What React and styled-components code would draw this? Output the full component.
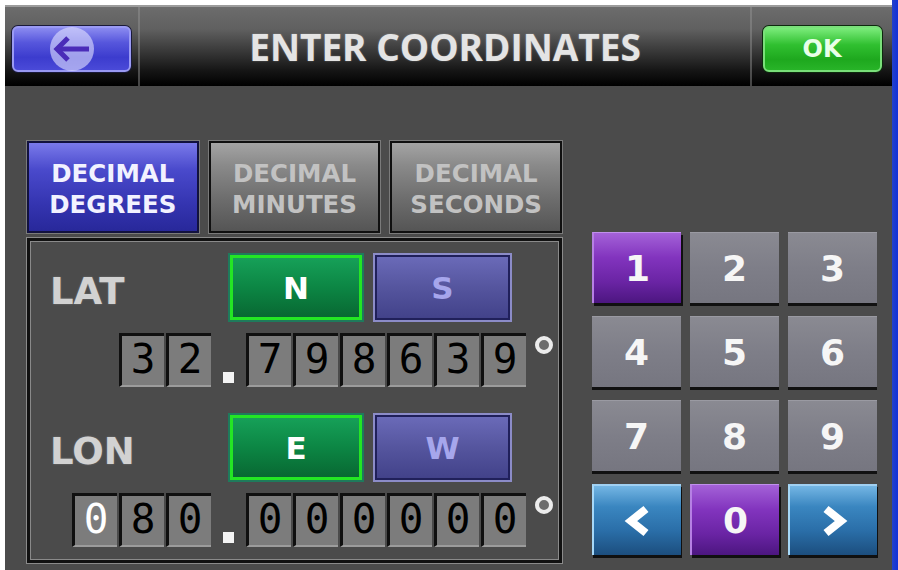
import React from 'react'
import styled, { createGlobalStyle, css } from 'styled-components'

const GlobalStyle = createGlobalStyle`
  html, body {
    margin: 0;
    padding: 0;
    background: #ffffff;
    width: 898px;
    height: 570px;
    overflow: hidden;
  }
  #root {
    height: 570px;
  }
  * {
    box-sizing: border-box;
  }
`

const Page = styled.div`
  display: flex;
  height: 570px;
  padding-left: 5px;
`

const Screen = styled.div`
  flex: 1;
  margin-top: 5px;
  display: flex;
  flex-direction: column;
  background: #4b4b4b;
`

const BlueEdge = styled.div`
  width: 6px;
  background: linear-gradient(to right, #2442c8, #1230d8);
`

// ---- header bar ----
const Header = styled.div`
  height: 81px;
  display: grid;
  grid-template-columns: 135px 1fr 140px;
  border-top: 2px solid #9c9c9c;
  background: linear-gradient(
    to bottom,
    #6c6c6c 0%,
    #606060 28%,
    #3e3e3e 52%,
    #161616 80%,
    #000000 100%
  );
`

const HeaderCell = styled.div`
  display: flex;
  align-items: flex-start;
  justify-content: center;
  padding-top: 19px;
  border-right: ${p => (p.$divider ? '2px solid rgba(150, 150, 150, 0.45)' : 'none')};
`

const Title = styled.div`
  font-family: 'Open Sans', 'DejaVu Sans', sans-serif;
  font-weight: 700;
  font-size: 37px;
  line-height: 44px;
  margin-top: -1px;
  color: #e4e4e4;
  text-shadow: 0 0 2px rgba(255, 255, 255, 0.3);
`

const HeadButton = styled.button`
  width: 119px;
  height: 46px;
  border-radius: 6px;
  display: flex;
  align-items: center;
  justify-content: center;
  padding: 0;
  cursor: pointer;
  font-family: 'DejaVu Sans', sans-serif;
  font-weight: 700;
  font-size: 24px;
  ${p =>
    p.$kind === 'back'
      ? css`
          border: 2px solid #9a9af4;
          box-shadow: 0 0 0 1px #1a1a3a;
          background: linear-gradient(to bottom, #8a8af0 0%, #5656dc 35%, #3c3cce 70%, #4a4ad8 100%);
        `
      : css`
          border: 2px solid #7ae07a;
          box-shadow: 0 0 0 1px #0d2a0d;
          color: #e8ffe8;
          background: linear-gradient(to bottom, #7cec7c 0%, #30c030 40%, #1ea81e 75%, #28b428 100%);
        `}
`

// ---- body ----
const Body = styled.div`
  flex: 1;
  display: flex;
  gap: 30px;
  padding: 55px 0 0 22px;
`

const LeftCol = styled.div`
  width: 535px;
  display: flex;
  flex-direction: column;
  gap: 5px;
`

const Tabs = styled.div`
  display: flex;
  gap: 10px;
`

const Tab = styled.div`
  flex: 1;
  height: 92px;
  display: flex;
  align-items: center;
  justify-content: center;
  text-align: center;
  font-family: 'DejaVu Sans', sans-serif;
  font-weight: 700;
  font-size: 24.5px;
  line-height: 31px;
  padding-top: 4px;
  border: 2px solid ${p => (p.$active ? '#12123e' : '#101010')};
  box-shadow: 0 0 0 1px #7a7a7a;
  color: ${p => (p.$active ? '#f2f2ff' : '#c2c2c2')};
  background: ${p =>
    p.$active
      ? 'linear-gradient(to bottom, #7a7aea 0%, #4a4acc 30%, #3434b0 70%, #28289a 100%)'
      : 'linear-gradient(to bottom, #a4a4a4 0%, #8a8a8a 25%, #6c6c6c 65%, #555555 100%)'};
`

const Panel = styled.div`
  height: 325px;
  border: 3px solid #111111;
  box-shadow: inset 0 0 0 1px #8a8a8a, 0 0 0 1px #8a8a8a;
  padding: 14px 6px 13px 20px;
  display: flex;
  flex-direction: column;
`

const CoordRow = styled.div`
  height: 65px;
  display: flex;
  align-items: center;
  margin-top: ${p => p.$top || 0}px;
`

const AxisLabel = styled.div`
  width: 180px;
  padding-top: 8px;
  font-family: 'DejaVu Sans', sans-serif;
  font-weight: 700;
  font-size: 37px;
  color: #d2d2d2;
  text-shadow: 0 0 2px rgba(255, 255, 255, 0.25);
`

const DirButton = styled.div`
  height: 65px;
  display: flex;
  align-items: center;
  justify-content: center;
  font-family: 'DejaVu Sans', sans-serif;
  font-weight: 700;
  font-size: 31px;
  ${p =>
    p.$on
      ? css`
          width: 132px;
          color: #ffffff;
          border: 3px solid #24e624;
          box-shadow: 0 0 0 2px #1f7a5c;
          background: linear-gradient(to bottom, #16a058 0%, #0c8644 50%, #086832 100%);
        `
      : css`
          width: 135px;
          margin-left: 13px;
          color: #a6a6ec;
          border: 2px solid #20205a;
          box-shadow: 0 0 0 2px #8c8cc8;
          background: linear-gradient(to bottom, #6a6ab8 0%, #55559e 50%, #42428a 100%);
        `}
`

const DigitRow = styled.div`
  height: 54px;
  margin-top: 13px;
  display: flex;
  justify-content: flex-end;
  align-items: stretch;
`

const DigitBox = styled.div`
  width: 45px;
  flex-shrink: 0;
  margin-right: 2px;
  background: #7c7c7c;
  border-top: 3px solid #101010;
  border-left: 3px solid #101010;
  border-bottom: 2px solid #9c9c9c;
  display: flex;
  justify-content: center;
  padding-top: 3px;
  font-family: 'DejaVu Sans Mono', monospace;
  font-size: 41px;
  line-height: 40px;
  color: ${p => (p.$cursor ? '#ffffff' : '#000000')};
`

const DotSlot = styled.div`
  width: 31px;
  flex-shrink: 0;
  margin-right: 2px;
  display: flex;
  justify-content: center;
  align-items: flex-end;
  padding-bottom: 4px;
`

const Dot = styled.div`
  width: 11px;
  height: 11px;
  background: #f4f4f4;
`

const DegreeRing = styled.div`
  width: 18px;
  height: 18px;
  flex-shrink: 0;
  align-self: flex-start;
  margin-left: 7px;
  margin-top: 3px;
  border-radius: 50%;
  border: 4px solid #ececec;
  background: #6c6c6c;
`

// ---- keypad ----
const Keypad = styled.div`
  margin-top: 91px;
  display: grid;
  grid-template-columns: repeat(3, 89px);
  grid-auto-rows: 71px;
  column-gap: 9px;
  row-gap: 13px;
  align-content: start;
`

const keyColors = {
  gray: css`
    background: linear-gradient(to bottom, #8a8a92 0%, #7e7e88 50%, #767680 100%);
    border-top: 1px solid #9a9aa2;
    box-shadow: 0 3px 0 #111111;
  `,
  purple: css`
    background: linear-gradient(to bottom, #a462d8 0%, #8234be 35%, #6a24a4 70%, #4c1680 100%);
    border-left: 2px solid #b680e4;
    border-top: 1px solid #c090ec;
    box-shadow: 2px 3px 0 #101010;
  `,
  blue: css`
    background: linear-gradient(to bottom, #74b6e4 0%, #3a86c0 30%, #2a6ea8 65%, #1c4e7e 100%);
    border-left: 2px solid #a6d8f8;
    border-top: 2px solid #a0d0f2;
    box-shadow: 1px 3px 0 #101010;
  `
}

const Key = styled.div`
  display: flex;
  align-items: center;
  justify-content: center;
  font-family: 'DejaVu Sans', sans-serif;
  font-weight: 700;
  font-size: 36px;
  color: #f6f6f6;
  ${p => keyColors[p.$tone || 'gray']}
`

const BackIcon = () => (
  <svg width="50" height="46" viewBox="0 0 50 46">
    <circle cx="25" cy="23" r="22" fill="rgba(226, 226, 255, 0.6)" />
    <path d="M10 23 H42" stroke="#4a2cb8" strokeWidth="5" />
    <path d="M21 12 L10 23 L21 34" fill="none" stroke="#4a2cb8" strokeWidth="5" strokeLinejoin="miter" />
  </svg>
)

const Chevron = ({ dir }) => (
  <svg width="28" height="32" viewBox="0 0 28 32">
    <polyline
      points={dir === 'left' ? '22,4 7,16 22,28' : '6,4 21,16 6,28'}
      fill="none"
      stroke="#ffffff"
      strokeWidth="8"
      strokeLinejoin="miter"
    />
  </svg>
)

const Digits = ({ whole, frac, cursor }) => (
  <DigitRow>
    {whole.split('').map((d, i) => (
      <DigitBox key={'w' + i} $cursor={cursor === i}>
        {d}
      </DigitBox>
    ))}
    <DotSlot>
      <Dot />
    </DotSlot>
    {frac.split('').map((d, i) => (
      <DigitBox key={'f' + i}>{d}</DigitBox>
    ))}
    <DegreeRing />
  </DigitRow>
)

const keys = [
  { label: '1', tone: 'purple' },
  { label: '2' },
  { label: '3' },
  { label: '4' },
  { label: '5' },
  { label: '6' },
  { label: '7' },
  { label: '8' },
  { label: '9' },
  { label: <Chevron dir="left" />, tone: 'blue' },
  { label: '0', tone: 'purple' },
  { label: <Chevron dir="right" />, tone: 'blue' }
]

const App = () => {
  return (
    <>
      <GlobalStyle />
      <Page>
        <Screen>
          <Header>
            <HeaderCell $divider>
              <HeadButton $kind="back">
                <BackIcon />
              </HeadButton>
            </HeaderCell>
            <HeaderCell $divider>
              <Title>ENTER COORDINATES</Title>
            </HeaderCell>
            <HeaderCell>
              <HeadButton $kind="ok">OK</HeadButton>
            </HeaderCell>
          </Header>

          <Body>
            <LeftCol>
              <Tabs>
                <Tab $active>
                  DECIMAL
                  <br />
                  DEGREES
                </Tab>
                <Tab>
                  DECIMAL
                  <br />
                  MINUTES
                </Tab>
                <Tab>
                  DECIMAL
                  <br />
                  SECONDS
                </Tab>
              </Tabs>

              <Panel>
                <CoordRow>
                  <AxisLabel>LAT</AxisLabel>
                  <DirButton $on>N</DirButton>
                  <DirButton>S</DirButton>
                </CoordRow>
                <Digits whole="32" frac="798639" />

                <CoordRow $top={28}>
                  <AxisLabel>LON</AxisLabel>
                  <DirButton $on>E</DirButton>
                  <DirButton>W</DirButton>
                </CoordRow>
                <Digits whole="080" frac="000000" cursor={0} />
              </Panel>
            </LeftCol>

            <Keypad>
              {keys.map((k, i) => (
                <Key key={i} $tone={k.tone}>
                  {k.label}
                </Key>
              ))}
            </Keypad>
          </Body>
        </Screen>
        <BlueEdge />
      </Page>
    </>
  )
}

export default App
